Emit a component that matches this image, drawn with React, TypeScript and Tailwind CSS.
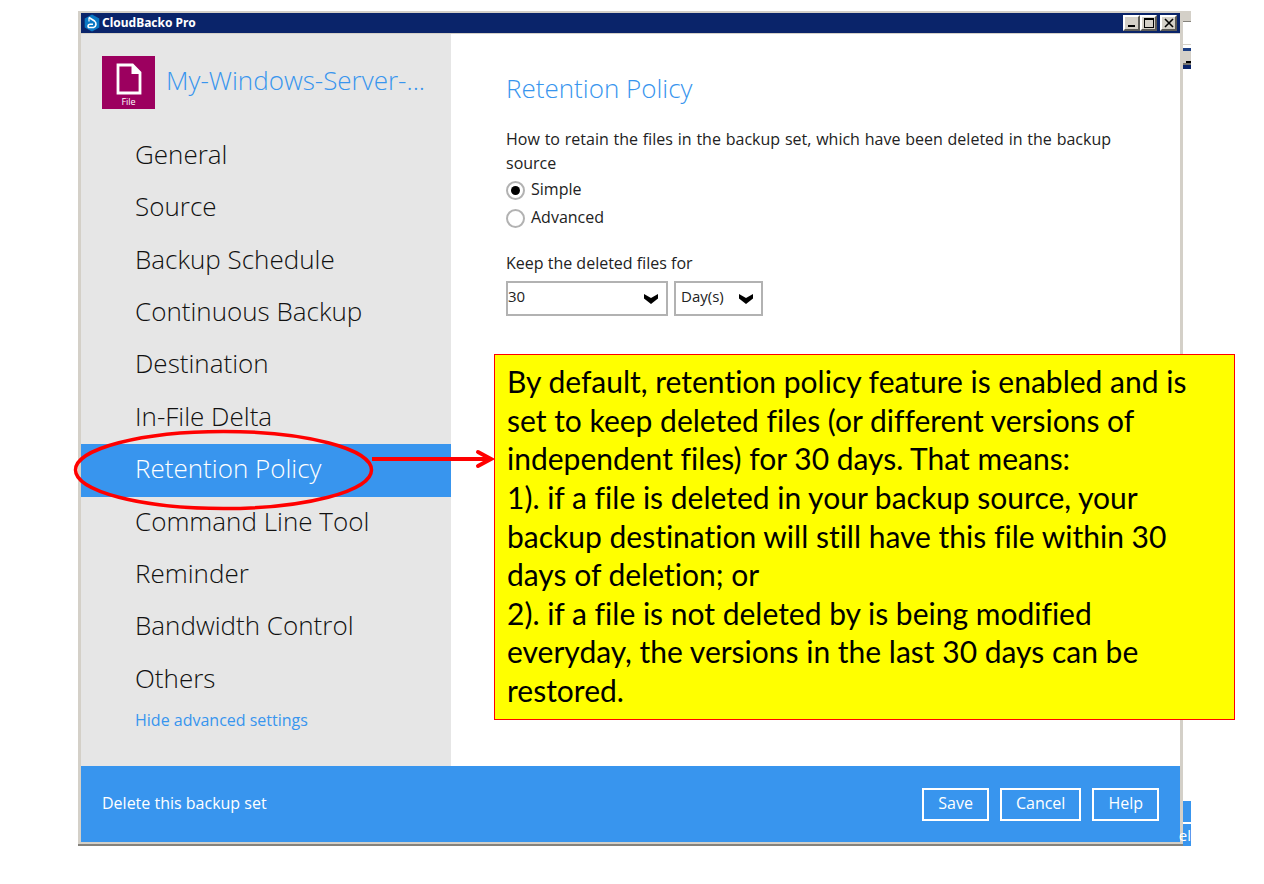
import React from "react";

const sections = [
  "General",
  "Source",
  "Backup Schedule",
  "Continuous Backup",
  "Destination",
  "In-File Delta",
  "Retention Policy",
  "Command Line Tool",
  "Reminder",
  "Bandwidth Control",
  "Others",
];

const noteLines = [
  "By default, retention policy feature is enabled and is",
  "set to keep deleted files (or different versions of",
  "independent files) for 30 days. That means:",
  "1). if a file is deleted in your backup source, your",
  "backup destination will still have this file within 30",
  "days of deletion; or",
  "2). if a file is not deleted by is being modified",
  "everyday, the versions in the last 30 days can be",
  "restored.",
];

function AppLogo() {
  return (
    <svg viewBox="0 0 16 18" className="h-[18px] w-4" aria-hidden="true">
      <path d="M8 .5 15.3 4.5v9L8 17.5.7 13.5v-9z" fill="#0a78c4" />
      <path
        d="M5 3.500 10.500 7C12.800 9 12.500 12.500 9.500 13.500H4.500C3.500 12 4.200 10.200 6 10.200H9"
        stroke="#fff"
        strokeWidth="1.600"
        strokeLinejoin="round"
        fill="none"
      />
      <path d="M5 3.500V7.500" stroke="#fff" strokeWidth="1.200" />
    </svg>
  );
}

function FileTile() {
  return (
    <div className="flex h-[53px] w-[53px] shrink-0 flex-col items-center bg-[#9c005f] pt-[7px] text-white">
      <svg viewBox="0 0 26 32" className="h-8 w-[26px]" aria-hidden="true">
        <path d="M2 2h14.500L24 9.500V30H2z" fill="none" stroke="#fff" strokeWidth="2.800" />
        <path d="M15.500 1v10H25z" fill="#fff" />
      </svg>
      <span className="text-[9px] leading-[14px]">File</span>
    </div>
  );
}

function WindowButton({ label, children }: { label: string; children: React.ReactNode }) {
  return (
    <button
      type="button"
      aria-label={label}
      className="flex h-4 w-[17px] items-center justify-center border-2 border-t-white border-r-[#5c5b57] border-b-[#5c5b57] border-l-white bg-[#d4d0c8]"
    >
      {children}
    </button>
  );
}

function TitleBar() {
  return (
    <header className="flex h-5 items-center bg-[#0a246a] pr-[3px] pl-[3px]">
      <AppLogo />
      <h1 className="ml-[2px] flex-1 font-['Noto_Sans',sans-serif] text-[12px] leading-5 font-bold text-white">
        CloudBacko Pro
      </h1>
      <div className="flex">
        <WindowButton label="Minimize">
          <svg viewBox="0 0 12 12" className="h-3 w-3" aria-hidden="true">
            <path d="M2 8h7v2H2z" />
          </svg>
        </WindowButton>
        <WindowButton label="Maximize">
          <svg viewBox="0 0 12 12" className="h-3 w-3" aria-hidden="true">
            <path d="M1 1h10v10H1zM2 3v7h8V3z" fillRule="evenodd" />
          </svg>
        </WindowButton>
        <div className="ml-[3px] flex">
          <WindowButton label="Close">
            <svg viewBox="0 0 12 12" className="h-3 w-3" aria-hidden="true">
              <path d="M2 2 10 10M10 2 2 10" stroke="#000" strokeWidth="1.600" />
            </svg>
          </WindowButton>
        </div>
      </div>
    </header>
  );
}

function Highlight() {
  return (
    <svg
      viewBox="0 0 424 84"
      className="pointer-events-none absolute top-[-16px] left-[-8px] z-20 h-[84px] w-[424px]"
      aria-hidden="true"
    >
      <ellipse cx="150.500" cy="42" rx="148" ry="38.500" fill="none" stroke="#f00" strokeWidth="3.500" />
      <path d="M299 31h118" stroke="#f00" strokeWidth="4" />
      <path d="M405 24 418 31 405 38" fill="none" stroke="#f00" strokeWidth="4" strokeLinecap="round" />
    </svg>
  );
}

function Sidebar() {
  return (
    <aside className="w-[370px] shrink-0 bg-[#e6e6e6] pt-[22px] pb-[33px]">
      <div className="flex pl-[21px]">
        <FileTile />
        <h2 className="ml-[11px] text-[26px] leading-[48px] font-light whitespace-nowrap text-[#3895ee]">
          My-Windows-Server-...
        </h2>
      </div>
      <nav aria-label="Backup set settings" className="mt-[21px]">
        <ul className="flex h-[576px] flex-col">
          {sections.map((name) => {
            const active = name === "Retention Policy";
            return (
              <li key={name} className={active ? "relative flex-1 bg-[#3895ee]" : "flex-1"}>
                <a
                  href="#"
                  aria-current={active ? "page" : undefined}
                  className={
                    active
                      ? "block pl-[54px] text-[26px] leading-[48px] font-light text-white"
                      : "block pl-[54px] text-[26px] leading-[48px] font-light text-[#111]"
                  }
                >
                  {name}
                </a>
                {active && <Highlight />}
              </li>
            );
          })}
        </ul>
      </nav>
      <a href="#" className="mt-px ml-[54px] block text-[16px] leading-[26px] text-[#3895ee]">
        Hide advanced settings
      </a>
    </aside>
  );
}

function Radio({ id, label, checked }: { id: string; label: string; checked?: boolean }) {
  return (
    <div className="flex h-7 items-center">
      <input
        id={id}
        type="radio"
        name="retention"
        defaultChecked={checked}
        className="mt-[3px] flex h-[19px] w-[19px] appearance-none items-center justify-center rounded-full border-2 border-[#b2b2b2] bg-white before:h-[9px] before:w-[9px] before:rounded-full checked:before:bg-black"
      />
      <label htmlFor={id} className="ml-[6px] text-[16px] leading-7">
        {label}
      </label>
    </div>
  );
}

function Chevron() {
  return (
    <svg
      viewBox="0 0 14 10"
      className="pointer-events-none absolute top-[13px] right-[10px] h-[10px] w-[14px]"
      aria-hidden="true"
    >
      <path d="M0 0 7 4 14 0V4.500L7 10 0 4.500z" />
    </svg>
  );
}

function RetentionPanel() {
  return (
    <main className="relative flex-1 bg-white pt-[35px] pr-[69px] pl-[55px] text-[16px] text-[#222]">
      <h2 className="text-[26px] leading-[38px] font-light text-[#3895ee]">Retention Policy</h2>
      <p className="mt-5 text-justify leading-6">
        How to retain the files in the backup set, which have been deleted in the backup source
      </p>
      <div>
        <Radio id="simple" label="Simple" checked />
        <Radio id="advanced" label="Advanced" />
      </div>
      <label htmlFor="amount" className="mt-5 block leading-6">
        Keep the deleted files for
      </label>
      <div className="mt-[6px] flex gap-[6px]">
        <div className="relative">
          <select
            id="amount"
            defaultValue="30"
            className="block h-[35px] w-[162px] appearance-none border-2 border-[#b2b2b2] bg-white pb-1 text-[15px]"
          >
            <option>30</option>
            <option>60</option>
          </select>
          <Chevron />
        </div>
        <div className="relative">
          <select
            aria-label="Unit"
            defaultValue="Day(s)"
            className="block h-[35px] w-[89px] appearance-none border-2 border-[#b2b2b2] bg-white pb-1 pl-[5px] text-[15px]"
          >
            <option>Day(s)</option>
            <option>Week(s)</option>
          </select>
          <Chevron />
        </div>
      </div>
      <aside
        aria-label="Note"
        className="absolute top-[320px] right-[-55px] left-[43px] z-10 border border-[#f00] bg-[#ff0] pt-2 pb-[11px] pl-3 font-[Lato,'Noto_Sans',sans-serif] text-[30px] leading-9 whitespace-nowrap text-black [font-variant-ligatures:none]"
      >
        <div className="flex h-[345px] flex-col justify-between">
          {noteLines.map((line) => (
            <p key={line}>{line}</p>
          ))}
        </div>
      </aside>
    </main>
  );
}

function FooterButton({ children }: { children: React.ReactNode }) {
  return (
    <button type="button" className="h-[33px] border-2 border-white px-[14px] pb-[3px] text-[16px] leading-6">
      {children}
    </button>
  );
}

function RearWindow() {
  return (
    <div aria-hidden="true" className="flex w-2 shrink-0 flex-col">
      <div className="h-[11px] border-b border-[#85827c] bg-[#d4d0c8]" />
      <div className="mt-[22px] h-[25px] border-t border-[#d4d0c8] bg-[#d4d0c8]">
        <div className="h-[3px] bg-white" />
        <div className="h-[3px] bg-[#1c3f84]" />
        <div className="h-[10px] bg-[#d4d0c8]" />
        <div className="ml-[3px] h-[2px] bg-black" />
        <div className="h-[2px] bg-[#77746e]" />
        <div className="h-1 bg-[#0a246a]" />
      </div>
      <div className="flex-1" />
      <div className="h-[45px] bg-[#3895ee] pt-[21px] text-white">
        <div className="h-[2px] bg-white" />
        <div className="flex justify-end text-[15px] leading-[22px]">el</div>
      </div>
    </div>
  );
}

export default function App() {
  return (
    <div className="flex min-h-screen items-start overflow-hidden bg-white pt-[11px] pr-[73px] pl-[78px] font-['Open_Sans','Noto_Sans',sans-serif]">
      <div className="flex min-w-0 flex-1 items-stretch">
        <div className="min-w-0 flex-1 border-b-2 border-[#85827c]">
          <div className="border-x-[3px] border-y-2 border-[#d4d0c8] bg-white">
            <TitleBar />
            <div className="flex border-t border-[#d4d0c8]">
              <Sidebar />
              <RetentionPanel />
            </div>
            <footer className="flex h-[76px] items-center bg-[#3895ee] pr-[21px] pl-[21px] text-white">
              <a href="#" className="flex-1 pb-[2px] text-[16px] leading-6">
                Delete this backup set
              </a>
              <div className="flex gap-[11px]">
                <FooterButton>Save</FooterButton>
                <FooterButton>Cancel</FooterButton>
                <FooterButton>Help</FooterButton>
              </div>
            </footer>
          </div>
        </div>
        <RearWindow />
      </div>
    </div>
  );
}
